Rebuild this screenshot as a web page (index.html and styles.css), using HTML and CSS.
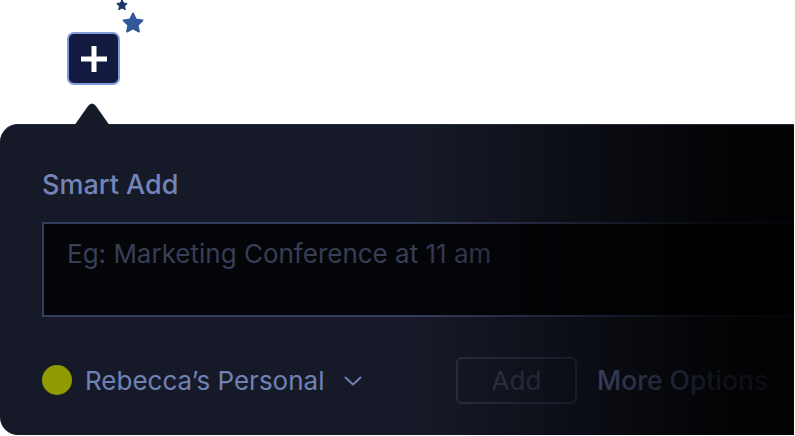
FILE: index.html
```html
<!DOCTYPE html>
<html lang="en">
<head>
  <meta charset="UTF-8" />
  <meta name="viewport" content="width=device-width, initial-scale=1" />
  <title>Smart Add</title>
  <link rel="stylesheet" href="styles.css">
</head>
<body>
  <div class="launcher">
    <button class="plus-btn" aria-label="Add">
      <svg width="28" height="28" viewBox="0 0 28 28">
        <rect x="11.5" y="1" width="5" height="26" fill="#fff"/>
        <rect x="1" y="11.5" width="26" height="5" fill="#fff"/>
      </svg>
    </button>
    <!-- sparkles -->
    <svg class="star star-small" width="12" height="12" viewBox="0 0 24 24">
      <path d="M12 1.5l3.2 6.6 7.2 1-5.2 5.1 1.3 7.2L12 18l-6.5 3.4 1.3-7.2L1.6 9.1l7.2-1z" fill="#1d3463" stroke="#1d3463" stroke-width="2" stroke-linejoin="round"/>
    </svg>
    <svg class="star star-big" width="22" height="22" viewBox="0 0 24 24">
      <path d="M12 1.5l3.2 6.6 7.2 1-5.2 5.1 1.3 7.2L12 18l-6.5 3.4 1.3-7.2L1.6 9.1l7.2-1z" fill="#33589a" stroke="#33589a" stroke-width="2" stroke-linejoin="round"/>
    </svg>
  </div>

  <div class="panel">
    <h2 class="panel-title">Smart Add</h2>
    <div class="smart-input">Eg: Marketing Conference at 11 am</div>

    <div class="panel-footer">
      <div class="calendar-pick">
        <span class="cal-dot"></span>
        <span class="cal-name">Rebecca’s Personal</span>
        <svg class="chevron" width="18" height="10" viewBox="0 0 18 10">
          <path d="M1.5 1.5l7.5 7 7.5-7" fill="none" stroke="#7081b5" stroke-width="2" stroke-linecap="round" stroke-linejoin="round"/>
        </svg>
      </div>
      <button class="add-btn">Add</button>
      <a class="more-link">More Options</a>
    </div>
  </div>
</body>
</html>
```

FILE: styles.css
```css
body {
  margin: 0;
  background: #fff;
  font-family: Inter, "Noto Sans", sans-serif;
  width: 795px;
  height: 436px;
  overflow: hidden;
}
.launcher {
  position: relative;
  padding: 32px 0 0 67px;
  height: 53px;
}
.plus-btn {
  width: 53px;
  height: 53px;
  box-sizing: border-box;
  border: 2px solid #7f9bdc;
  border-radius: 7px;
  background: #131a40;
  display: flex;
  align-items: center;
  justify-content: center;
  padding: 0;
}
.star {
  position: absolute;
}
.star-small {
  left: 116px;
  top: -1px;
}
.star-big {
  left: 122px;
  top: 12px;
}
.panel {
  position: relative;
  margin-top: 39px;
  width: 794px;
  height: 311px;
  box-sizing: border-box;
  padding: 44px 0 0 42px;
  background: #161a28;
  border-top: 1px solid #23283a;
  border-radius: 18px 0 0 18px;
}
.panel::before {
  content: "";
  position: absolute;
  left: 74px;
  top: -22px;
  width: 36px;
  height: 23px;
  background: #161a28;
  clip-path: path("M0 23 L14 3 Q18 -2 22 3 L36 23 Z");
}
.panel::after {
  content: "";
  position: absolute;
  inset: 0;
  border-radius: inherit;
  background: linear-gradient(to right, rgba(0,0,0,0) 52%, rgba(0,0,0,0.45) 72%, rgba(0,0,0,0.85) 90%, rgba(0,0,0,0.92) 100%);
  pointer-events: none;
}
.panel > * {
  position: relative;
}
.panel-title {
  margin: 0;
  font-size: 27px;
  font-weight: 500;
  line-height: 32px;
  color: #7384b8;
}
.smart-input {
  margin-top: 21px;
  width: 752px;
  height: 95px;
  box-sizing: border-box;
  border: 2px solid #343d5e;
  border-right: none;
  background: #040509;
  padding: 15px 0 0 23px;
  font-size: 26px;
  line-height: 30px;
  color: #373e55;
}
.panel-footer {
  display: flex;
  align-items: center;
  margin-top: 39px;
  height: 48px;
}
.calendar-pick {
  display: flex;
  align-items: center;
  width: 414px;
}
.cal-dot {
  width: 30px;
  height: 30px;
  border-radius: 50%;
  background: #8f9b00;
  margin-right: 13px;
}
.cal-name {
  font-size: 26px;
  color: #7081b5;
}
.chevron {
  margin-left: 20px;
  margin-top: 2px;
}
.add-btn {
  width: 121px;
  height: 47px;
  border: 2px solid #2b3249;
  border-radius: 6px;
  background: transparent;
  font-family: inherit;
  font-size: 26px;
  color: #363c50;
  padding: 0;
}
.more-link {
  margin-left: 20px;
  font-size: 26.5px;
  font-weight: 500;
  color: #6f82bd;
}
```
